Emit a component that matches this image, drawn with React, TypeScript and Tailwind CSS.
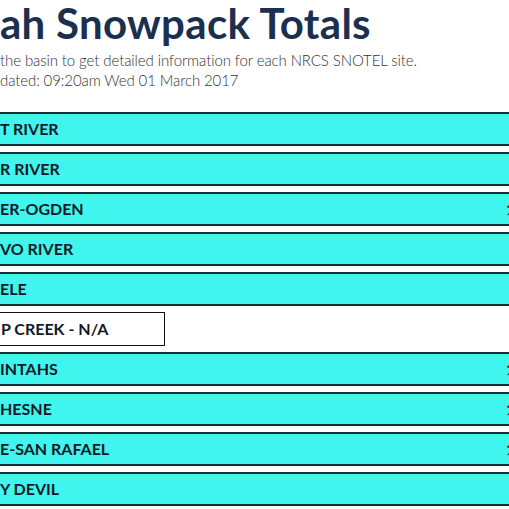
import React from 'react'

const basins = [
  { name: 'T RIVER', tail: '' },
  { name: 'R RIVER', tail: '' },
  { name: 'ER-OGDEN', tail: '1' },
  { name: 'VO RIVER', tail: '' },
  { name: 'ELE', tail: '' },
  { name: 'P CREEK - N/A', tail: '', na: true },
  { name: 'INTAHS', tail: '1' },
  { name: 'HESNE', tail: '1' },
  { name: 'E-SAN RAFAEL', tail: '1' },
  { name: 'Y DEVIL', tail: '' },
]

export default function App() {
  return (
    <div className="w-[509px] h-[509px] overflow-hidden bg-white font-['Lato','Liberation_Sans',sans-serif]">
      <h1 className="text-[42px] leading-[46px] font-bold text-[#1b2f4f] tracking-[0.3px]">
        ah Snowpack Totals
      </h1>
      <p className="text-[15px] leading-[20px] text-[#333] font-light mt-[4px] tracking-[-0.1px]">
        the basin to get detailed information for each NRCS SNOTEL site.
      </p>
      <p className="text-[15px] leading-[20px] text-[#333] font-light tracking-[-0.1px]">
        dated: 09:20am Wed 01 March 2017
      </p>
      <ul className="mt-[22px] flex flex-col gap-[6px] w-[540px]">
        {basins.map((b) =>
          b.na ? (
            <li
              key={b.name}
              className="h-[34px] w-[167px] -ml-[2px] border border-[#111] bg-white flex items-center text-[16px] font-bold text-[#111a26] pl-[2px]"
            >
              {b.name}
            </li>
          ) : (
            <li
              key={b.name}
              className="h-[34px] border-y-2 border-[#17302f] bg-[#40f5ee] flex items-center text-[16px] font-bold text-[#111a26]"
            >
              <span className="flex-1">{b.name}</span>
              {b.tail && <span className="w-[34px]">{b.tail}</span>}
            </li>
          )
        )}
      </ul>
    </div>
  )
}
